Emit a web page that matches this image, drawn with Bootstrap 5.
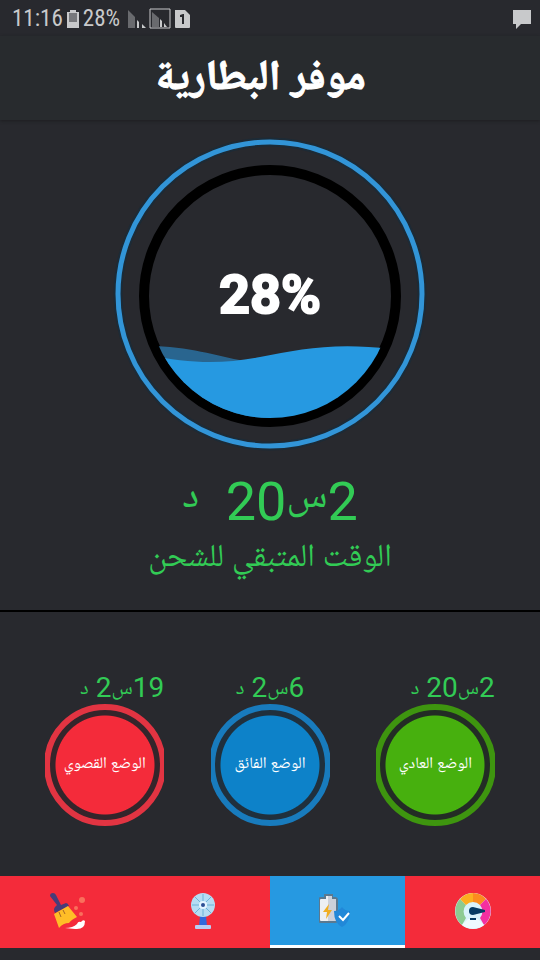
<!DOCTYPE html>
<html lang="ar" dir="rtl">
<head>
<meta charset="utf-8">
<meta name="viewport" content="width=device-width, initial-scale=1">
<title>موفر البطارية</title>
<link rel="stylesheet" href="https://cdn.jsdelivr.net/npm/bootstrap@5.3.0/dist/css/bootstrap.min.css">
<style>
body{background:#28292e;color:#fff;font-family:Roboto,"Noto Naskh Arabic UI","Noto Sans Arabic UI","Noto Sans Arabic","DejaVu Sans",sans-serif}
.statusbar{height:36px;padding:2px 9px 0 12px;color:#c8c9cb;font:23px/34px "Roboto Condensed","Liberation Sans Narrow",Roboto,sans-serif}
.statusbar svg{flex:none}
.titlebar{height:84px;background:#282b2e;box-shadow:0 1px 3px #1d1e21;padding:6px 20px 0 0}
.titlebar h1{font-size:42px;font-weight:700;line-height:48px;-webkit-text-stroke:1px #fff}
.gauge{width:316px;margin-top:17px}
.gauge-value{font-size:54px;line-height:60px;font-weight:700;-webkit-text-stroke:2px #fff}
.remain{color:#32cb55}
.remain-time{font-size:54px;line-height:66px;white-space:pre}
.remain-time .unit{vertical-align:8px}
.remain-label{font-size:32px;line-height:48px}
.unit{font-size:75%;line-height:1}
.rule{height:2px;background:#000;margin-top:27px}
.modes{padding:60px 22px 0}
.mode-box{width:119px}
.mode-time{font-size:28px;line-height:32px;white-space:pre;color:#32cb55}
.mode-btn{height:122px;width:119px;overflow:hidden;color:#fff;font-size:16px}
.mode-ring{flex:none;width:122px;height:122px;border:6px solid var(--ring);background:radial-gradient(circle,var(--fill) 49px,var(--gap) 50px)}
.tabs{background:#f42b3a}
.tabs a{height:72px;border-bottom:3px solid transparent}
.tabs a.active{background:#2699e1;border-color:#fff}
.foot{min-height:12px;background:#28292e}
</style>
<script src="https://cdn.jsdelivr.net/npm/bootstrap@5.3.0/dist/js/bootstrap.bundle.min.js"></script>
</head>
<body class="d-flex flex-column min-vh-100">
<div class="statusbar d-flex align-items-center" dir="ltr">
  <span>11:16</span>
  <svg class="ms-1" width="12" height="18" viewBox="0 0 12 18"><path d="M0 2h3V0h6v2h3v16H0z" fill="#c8c9cb"/><path d="M2 3h8v9H2z" fill="#77787c"/></svg>
  <span class="ms-1">28%</span>
  <svg class="ms-2" width="64" height="22" viewBox="0 0 64 22"><path d="M0 2l7 7v11H0z" fill="#696a6e"/><path d="M9 12l2 2v6H9zM14 16l4 4h-4z" fill="#c8c9cb"/><path d="M22 1h20v19H22z" fill="none" stroke="#c8c9cb"/><path d="M24 4l7 6v9h-7z" fill="#696a6e"/><path d="M32 11l2 2v6h-2zM36 15l3 4h-3z" fill="#c8c9cb"/><path d="M47 2h10l5 5v12q0 1-1 1H48q-1 0-1-1z" fill="#c8c9cb"/><path d="M52 7l3-1h1v10h-2V9h-2z" fill="#28292e"/></svg>
  <svg class="ms-auto" width="18" height="19" viewBox="0 0 18 19"><path d="M0 0h18v14H8l-5 5v-5H0z" fill="#c8c9cb"/></svg>
</div>
<header class="titlebar d-flex align-items-center justify-content-center"><h1 class="m-0 pe-0">موفر البطارية</h1></header>
<main class="flex-grow-1">
  <div class="gauge position-relative mx-auto">
    <svg class="d-block w-100" viewBox="-158 -158 316 316" aria-hidden="true">
      <defs><clipPath id="bowl"><circle r="122"/></clipPath></defs>
      <g transform="translate(0 -1)"><circle r="152" fill="none" stroke="#1c2b37" stroke-width="9"/><circle r="152" fill="none" stroke="#3295d8" stroke-width="5"/></g>
      <g transform="translate(0 1)"><circle r="126" fill="none" stroke="#000" stroke-width="10"/>
      <g clip-path="url(#bowl)"><path d="M-122 50C-80 50-55 60-25 65L0 71V130H-122z" fill="#29658f"/><path d="M-122 59C-80 68-45 68-10 61C30 53 65 46 122 53V130H-122z" fill="#2699e1"/></g></g>
    </svg>
    <div class="gauge-value position-absolute top-50 start-50 translate-middle" dir="ltr">28%</div>
  </div>
  <section class="remain text-center mt-3"><div class="remain-time">2<span class="unit">س</span>20  <span class="unit">د</span></div><div class="remain-label">الوقت المتبقي للشحن</div></section>
  <div class="rule"></div>
  <section class="modes row g-0">
    <div class="col-4"><div class="mode-box mx-auto"><div class="mode-time">2<span class="unit">س</span>20 <span class="unit">د</span></div><button class="mode-btn btn p-0 border-0 rounded-0 d-flex justify-content-center"><span class="mode-ring rounded-circle d-flex align-items-center justify-content-center" style="--ring:#3e950f;--gap:#232c25;--fill:#47b00e">الوضع العادي</span></button></div></div>
    <div class="col-4"><div class="mode-box mx-auto"><div class="mode-time text-center">6<span class="unit">س</span>2 <span class="unit">د</span></div><button class="mode-btn btn p-0 border-0 rounded-0 d-flex justify-content-center"><span class="mode-ring rounded-circle d-flex align-items-center justify-content-center" style="--ring:#187bbd;--gap:#20303d;--fill:#0d82c9">الوضع الفائق</span></button></div></div>
    <div class="col-4"><div class="mode-box mx-auto"><div class="mode-time">19<span class="unit">س</span>2 <span class="unit">د</span></div><button class="mode-btn btn p-0 border-0 rounded-0 d-flex justify-content-center"><span class="mode-ring rounded-circle d-flex align-items-center justify-content-center" style="--ring:#e23442;--gap:#34252b;--fill:#f42b3a">الوضع القصوي</span></button></div></div>
  </section>
</main>
<nav class="tabs row g-0">
  <a href="#" aria-label="الأداء" class="col-3 d-flex align-items-center justify-content-center"><svg width="38" height="38" viewBox="0 0 38 38"><circle cx="19" cy="19" r="18" fill="#d9f3fb"/><path d="M8 33A18 18 0 0 1 6 7l6 6a10 10 0 0 0 0 13z" fill="#8dcb92"/><path d="M6 7A18 18 0 0 1 19 1v9a10 10 0 0 0-7 3z" fill="#fcae20"/><path d="M19 1a18 18 0 0 1 13 6l-6 6a10 10 0 0 0-7-3z" fill="#fc8b1f"/><path d="M32 7a18 18 0 0 1-2 26l-4-7a10 10 0 0 0 0-13z" fill="#f52fa0"/><path d="M8 33l6-6h10l6 6a18 18 0 0 1-22 0z" fill="#eefbff"/><path d="M19 15l12 3v2l-12 3a4 4 0 1 1 0-8z" fill="#063b63"/><path d="M16 26h6v2h-6z" fill="#063b63"/></svg></a>
  <a href="#" aria-label="البطارية" aria-current="page" class="active col-3 d-flex align-items-center justify-content-center"><svg width="38" height="36" viewBox="2 0 38 36"><path d="M8 2h7v3h3q2 0 2 2v20q0 2-2 2H4q-2 0-2-2V7q0-2 2-2h4z" fill="#edf0f3" stroke="#5a7990" stroke-width="2"/><path d="M11 3h4v3h4v22h-8z" fill="#ccd1da"/><path d="M12 11l-6 8h4l-1 7 6-9h-4z" fill="#f0ae22"/><path d="M17 18q5 0 8-4 3 4 8 4 0 12-8 16-8-4-8-16z" fill="#2188d8"/><path d="M22 23l4 4 6-7" fill="none" stroke="#fff" stroke-width="2"/></svg></a>
  <a href="#" aria-label="التبريد" class="col-3 d-flex align-items-center justify-content-center"><svg width="26" height="38" viewBox="0 0 26 38"><path d="M10 24h6l1 10H9z" fill="#3268db"/><rect x="5" y="33" width="16" height="4" rx="1" fill="#b9cdf4"/><circle cx="13" cy="13" r="12" fill="#b5dcf3"/><path d="M13 2v22M2 13h22M5 5l16 16M5 21L21 5" stroke="#6db2d8" stroke-width="1"/><circle cx="13" cy="13" r="4" fill="#e5f5ff"/><circle cx="13" cy="13" r="2" fill="#2d4f94"/></svg></a>
  <a href="#" aria-label="التنظيف" class="col-3 d-flex align-items-center justify-content-center"><svg width="38" height="38" viewBox="0 0 38 38"><path d="M1 4q0-3 3-3 2 0 3 2l5 10 5-2q2 0 3 3l-14 7q-2-4 0-6l2-2z" fill="#473c78"/><path d="M5 22l14-8 9 11q-6 3-8 6-6 0-10 5z" fill="#ffbd27"/><path d="M10 20l2 5M14 18l2 4" stroke="#a76525" stroke-width="1"/><circle cx="33" cy="8" r="3" fill="#f9705c"/><circle cx="27" cy="16" r="2" fill="#f9705c"/><circle cx="32" cy="22" r="2" fill="#f9705c"/><path d="M16 36q8 0 12-4 1-3 4-2 2-3 4-1 0 9-10 8z" fill="#fff"/></svg></a>
</nav>
<div class="foot"></div>
</body>
</html>
